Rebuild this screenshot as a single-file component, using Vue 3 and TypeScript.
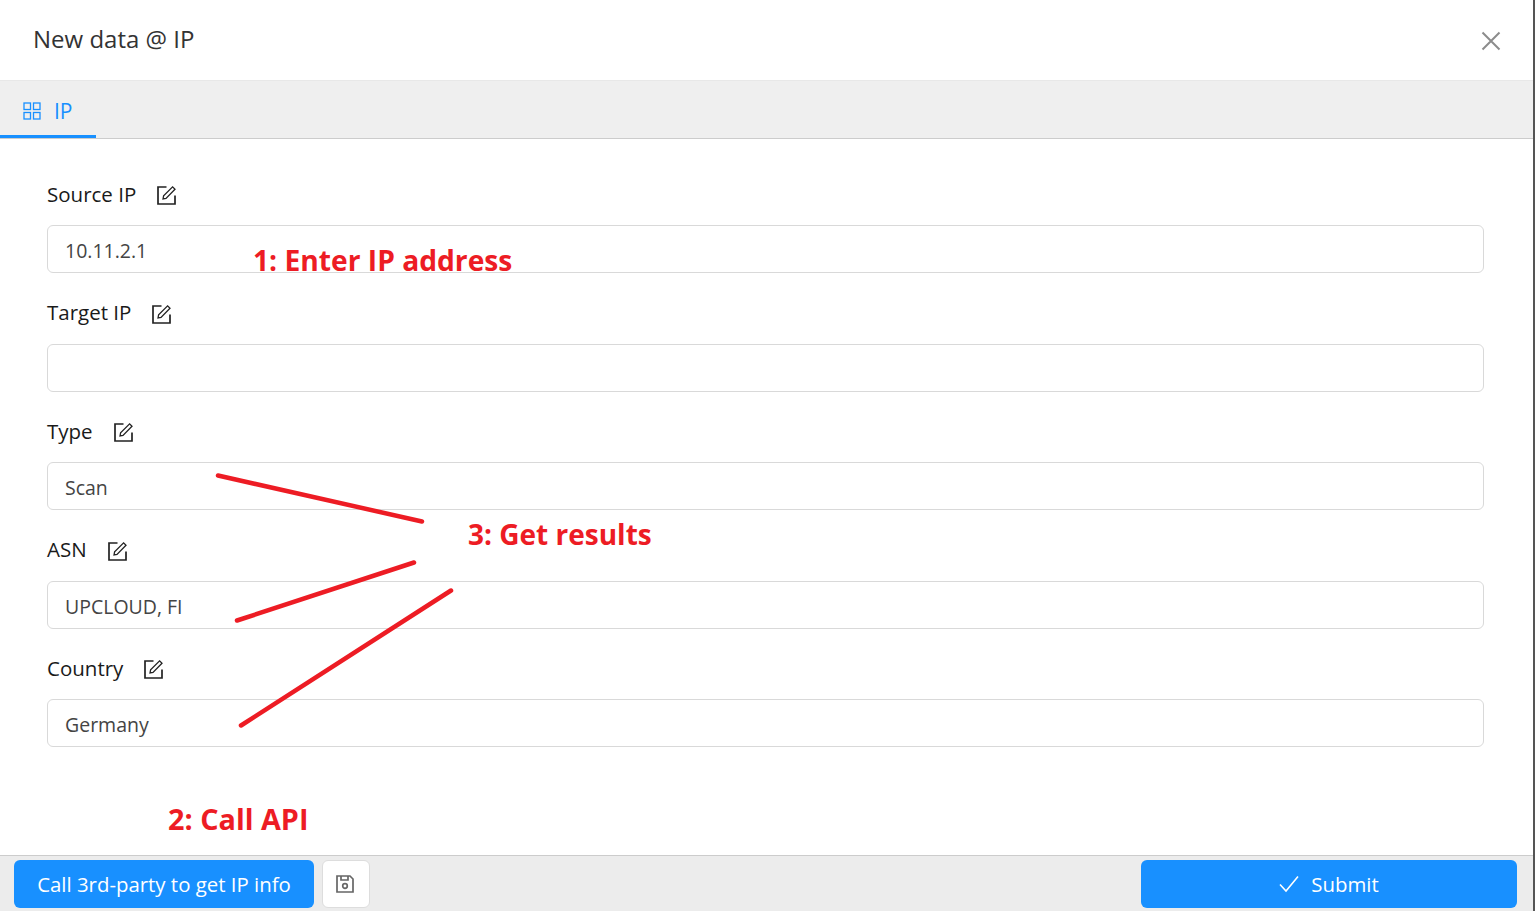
<template>
  <div class="modal">
    <header class="modal-head">
      <h1>New data @ IP</h1>
      <svg class="close" viewBox="0 0 20 20" width="20" height="20"><path d="M1.5 1.5 18.500 18.500M18.500 1.500 1.500 18.500" /></svg>
    </header>

    <nav class="tabs">
      <div class="tab">
        <svg viewBox="0 0 18 18" width="18" height="18" fill="none" stroke="currentColor" stroke-width="1.300">
          <rect x="1" y="1" width="6.500" height="6.500" />
          <rect x="10.500" y="1" width="6.500" height="6.500" />
          <rect x="1" y="10.500" width="6.500" height="6.500" />
          <rect x="10.500" y="10.500" width="6.500" height="6.500" />
        </svg>
        <span>IP</span>
      </div>
    </nav>

    <main class="form">
      <div v-for="field in fields" :key="field.label" class="field">
        <div class="label">
          <span class="label-text">{{ field.label }}</span>
          <svg viewBox="0 0 20 20" width="20" height="20" fill="none" stroke="#222" stroke-width="1.700">
            <path d="M9.500 2H1v17h17v-8.500" />
            <path d="M6 14 6.600 10.800 15.600 1.800l2.400 2.400L9 13.400z" stroke-width="1.300" />
          </svg>
        </div>
        <div class="input">{{ field.value }}</div>
      </div>
    </main>

    <footer class="foot">
      <button class="btn call">Call 3rd-party to get IP info</button>
      <button class="btn save">
        <svg viewBox="0 0 20 20" width="20" height="20" fill="none" stroke="#666" stroke-width="1.700">
          <path d="M2 2h13l3 3v13H2z" />
          <path d="M6 2v4h7V2" />
          <circle cx="10" cy="12" r="2.300" />
        </svg>
      </button>
      <button class="btn submit">
        <svg viewBox="0 0 20 20" width="20" height="20" fill="none" stroke="#fff" stroke-width="1.600"><path d="M1 10.500 7 17 19 2.500" /></svg>
        <span>Submit</span>
      </button>
    </footer>

    <svg class="marks" width="1535" height="911">
      <line x1="218" y1="475.500" x2="422" y2="521.500" />
      <line x1="237" y1="620.500" x2="414" y2="562.500" />
      <line x1="241" y1="725.500" x2="451" y2="590.500" />
    </svg>
    <span class="note n1">1: Enter IP address</span>
    <span class="note n2">2: Call API</span>
    <span class="note n3">3: Get results</span>
  </div>
</template>

<script setup lang="ts">
const fields = [
  { label: 'Source IP', value: '10.11.2.1' },
  { label: 'Target IP', value: '' },
  { label: 'Type', value: 'Scan' },
  { label: 'ASN', value: 'UPCLOUD, FI' },
  { label: 'Country', value: 'Germany' },
]
</script>

<style>
html,
body {
  margin: 0;
  overflow: hidden;
}
</style>

<style scoped>
.modal {
  position: relative;
  width: 1535px;
  height: 911px;
  display: flex;
  flex-direction: column;
  background: #fff;
  border-right: 2px solid #555;
  box-sizing: border-box;
  font-family: 'Open Sans', 'Noto Sans', sans-serif;
  color: #1a1a1a;
  overflow: hidden;
}

.modal-head {
  height: 80px;
  flex: none;
  display: flex;
  align-items: center;
  justify-content: space-between;
  padding: 0 34px 0 33px;
  box-sizing: border-box;
}

.modal-head h1 {
  margin: 0 0 4px;
  font-size: 24px;
  font-weight: 400;
  color: #333;
}

.close {
  margin-right: -2px;
  margin-top: 2px;
  stroke: #8c8c8c;
  stroke-width: 2;
}

.tabs {
  height: 59px;
  flex: none;
  box-sizing: border-box;
  background: #efefef;
  border-top: 1px solid #e8e8e8;
  border-bottom: 1px solid #ccc;
}

.tab {
  width: 96px;
  height: 57px;
  box-sizing: border-box;
  display: flex;
  align-items: center;
  gap: 13px;
  padding: 6px 0 0 23px;
  color: #1890ff;
  font-size: 21px;
  border-bottom: 3px solid #1890ff;
}

.form {
  flex: 1;
  padding: 38px 49px 0 47px;
  display: flex;
  flex-direction: column;
  gap: 22.5px;
}

.label {
  height: 36px;
  margin-bottom: 12px;
  display: flex;
  align-items: center;
  gap: 21px;
  font-size: 20.500px;
}

.label-text {
  margin-bottom: 3px;
}

.input {
  height: 48px;
  box-sizing: border-box;
  padding: 7px 17px 0;
  border: 1px solid #d9d9d9;
  border-radius: 6px;
  font-size: 19.500px;
  line-height: 36px;
  color: #444;
}

.foot {
  height: 56px;
  flex: none;
  box-sizing: border-box;
  display: flex;
  gap: 8px;
  padding: 4px 16px 3px 14px;
  background: #ececec;
  border-top: 1px solid #ccc;
}

.btn {
  height: 48px;
  border: 0;
  padding: 0;
  border-radius: 6px;
  font-family: inherit;
  font-size: 20.400px;
  color: #fff;
  background: #1890ff;
  display: flex;
  align-items: center;
  justify-content: center;
}

.call {
  width: 300px;
}

.save {
  width: 48px;
  background: #fff;
  border: 1px solid #ddd;
}

.save svg {
  margin-right: 2px;
}

.submit {
  width: 376px;
  margin-left: auto;
  gap: 12px;
}

.marks {
  position: absolute;
  left: 0;
  top: 0;
  pointer-events: none;
}

.marks line {
  stroke: #ed1c24;
  stroke-width: 4.500;
  stroke-linecap: round;
}

.note {
  position: absolute;
  font-size: 28.200px;
  font-weight: 700;
  line-height: 40px;
  color: #ed1c24;
  white-space: nowrap;
}

.n1 {
  left: 253px;
  top: 240px;
}

.n2 {
  left: 168px;
  top: 799px;
  font-size: 28.800px;
}

.n3 {
  left: 468px;
  top: 514px;
  font-size: 28px;
}
</style>
